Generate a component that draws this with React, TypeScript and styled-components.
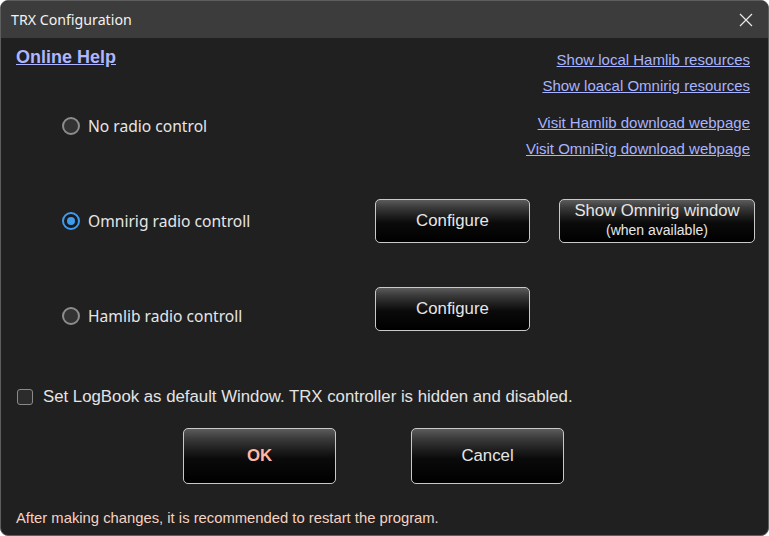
import React from "react";
import styled, { createGlobalStyle } from "styled-components";

const Global = createGlobalStyle`
  html, body { margin: 0; padding: 0; background: #ffffff; }
  body { width: 769px; height: 536px; overflow: hidden; }
  * { box-sizing: border-box; }
`;

const Window = styled.div`
  width: 769px;
  height: 536px;
  display: flex;
  flex-direction: column;
  background: #202020;
  border: 1px solid #5e5e5e;
  border-radius: 8px;
  overflow: hidden;
  font-family: "Liberation Sans", Arial, sans-serif;
`;

const TitleBar = styled.div`
  height: 37px;
  flex: none;
  display: flex;
  align-items: center;
  justify-content: space-between;
  background: #3c3c3c;
  padding: 0 14px 0 10px;
`;

const Title = styled.span`
  font-family: "Noto Sans", sans-serif;
  font-size: 14.2px;
  color: #f2f2f2;
`;

const CloseBtn = styled.span`
  display: flex;
  width: 16px;
  height: 16px;
  align-items: center;
  justify-content: center;
`;

const Body = styled.div`
  flex: 1;
  display: flex;
  flex-direction: column;
  padding: 9px 18px 0 15px;
`;

const TopSection = styled.div`
  display: flex;
  justify-content: space-between;
  align-items: flex-start;
`;

const LeftCol = styled.div`
  display: flex;
  flex-direction: column;
  padding-top: 1px;
`;

const HelpLink = styled.a`
  font-size: 18px;
  line-height: 18px;
  font-weight: bold;
  color: #aeb6ff;
  text-decoration: underline;
  cursor: pointer;
`;

const LinkCol = styled.div`
  display: flex;
  flex-direction: column;
  align-items: flex-end;
`;

const LinkGroup = styled.div<{ $gap?: number }>`
  display: flex;
  flex-direction: column;
  align-items: flex-end;
  margin-top: ${(p) => p.$gap ?? 0}px;
`;

const SideLink = styled.a`
  font-size: 15px;
  line-height: 26px;
  color: #a8b4ff;
  text-decoration: underline;
  cursor: pointer;
`;

const RadioRow = styled.label<{ $offset?: number }>`
  display: flex;
  align-items: center;
  gap: 8px;
  height: 20px;
  margin-left: 46px;
  margin-top: ${(p) => p.$offset ?? 0}px;
  font-family: "Noto Sans", sans-serif;
  font-size: 15.6px;
  color: #e6e6e6;
`;

const RadioCircle = styled.span<{ $checked?: boolean }>`
  width: 18px;
  height: 18px;
  border-radius: 50%;
  border: 2px solid ${(p) => (p.$checked ? "#3d9cf0" : "#8c8c8c")};
  background: ${(p) => (p.$checked ? "#1a1a1a" : "#333333")};
  display: flex;
  align-items: center;
  justify-content: center;
  flex: none;
  &::after {
    content: "";
    display: ${(p) => (p.$checked ? "block" : "none")};
    width: 8px;
    height: 8px;
    border-radius: 50%;
    background: #3d9cf0;
  }
`;

const OptionRow = styled.div<{ $top: number }>`
  display: grid;
  grid-template-columns: 284px 155px 196px;
  column-gap: 29px;
  align-items: center;
  margin-top: ${(p) => p.$top}px;
  padding-left: 46px;
  & > ${RadioRow} {
    margin-left: 0;
  }
`;

const ActionButton = styled.button<{ $h?: number; $primary?: boolean }>`
  height: ${(p) => p.$h ?? 44}px;
  border: 1px solid #c9c9c9;
  border-radius: 5px;
  background: linear-gradient(
    to bottom,
    #5c5c5c 0%,
    #3a3a3a 18%,
    #1c1c1c 40%,
    #0a0a0a 55%,
    #000000 100%
  );
  color: ${(p) => (p.$primary ? "#ffb8a4" : "#e6e6e6")};
  font-family: "Liberation Sans", Arial, sans-serif;
  font-size: 16.8px;
  font-weight: ${(p) => (p.$primary ? "bold" : "normal")};
  display: flex;
  flex-direction: column;
  align-items: center;
  justify-content: center;
  padding: 0;
  cursor: pointer;
`;

const BtnMain = styled.span`
  font-size: 16.7px;
  line-height: 20px;
  margin-top: -3px;
`;

const BtnSub = styled.span`
  font-size: 14px;
  line-height: 18px;
`;

const CheckRow = styled.label`
  display: flex;
  align-items: center;
  gap: 10px;
  height: 20px;
  margin-top: 56px;
  font-size: 16.8px;
  color: #e4e4e4;
`;

const CheckBox = styled.span`
  width: 16px;
  height: 16px;
  border: 1px solid #8a8a8a;
  border-radius: 3px;
  background: #2c2c2c;
  flex: none;
  margin-left: 1px;
`;

const ButtonRow = styled.div`
  display: grid;
  grid-template-columns: 153px 153px;
  column-gap: 75px;
  margin-top: 21px;
  padding-left: 167px;
`;

const Footer = styled.div`
  margin-top: 25px;
  font-size: 14.8px;
  line-height: 18px;
  color: #f6d2c2;
`;

export default function App() {
  return (
    <>
      <Global />
      <Window>
        <TitleBar>
          <Title>TRX Configuration</Title>
          <CloseBtn>
            <svg width="14" height="14" viewBox="0 0 14 14">
              <path d="M1 1 L13 13 M13 1 L1 13" stroke="#e8e8e8" strokeWidth="1.2" />
            </svg>
          </CloseBtn>
        </TitleBar>
        <Body>
          <TopSection>
            <LeftCol>
              <HelpLink>Online Help</HelpLink>
              <RadioRow $offset={50}>
                <RadioCircle />
                No radio control
              </RadioRow>
            </LeftCol>
            <LinkCol>
              <LinkGroup>
                <SideLink>Show local Hamlib resources</SideLink>
                <SideLink>Show loacal Omnirig resources</SideLink>
              </LinkGroup>
              <LinkGroup $gap={11}>
                <SideLink>Visit Hamlib download webpage</SideLink>
                <SideLink>Visit OmniRig download webpage</SideLink>
              </LinkGroup>
            </LinkCol>
          </TopSection>

          <OptionRow $top={37}>
            <RadioRow>
              <RadioCircle $checked />
              Omnirig radio controll
            </RadioRow>
            <ActionButton>Configure</ActionButton>
            <ActionButton>
              <BtnMain>Show Omnirig window</BtnMain>
              <BtnSub>(when available)</BtnSub>
            </ActionButton>
          </OptionRow>

          <OptionRow $top={44}>
            <RadioRow $offset={14}>
              <RadioCircle />
              Hamlib radio controll
            </RadioRow>
            <ActionButton>Configure</ActionButton>
          </OptionRow>

          <CheckRow>
            <CheckBox />
            Set LogBook as default Window. TRX controller is hidden and disabled.
          </CheckRow>

          <ButtonRow>
            <ActionButton $h={56} $primary>
              OK
            </ActionButton>
            <ActionButton $h={56}>Cancel</ActionButton>
          </ButtonRow>

          <Footer>After making changes, it is recommended to restart the program.</Footer>
        </Body>
      </Window>
    </>
  );
}
